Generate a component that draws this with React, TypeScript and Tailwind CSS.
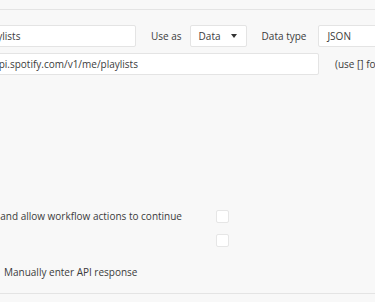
import { useState } from "react";

const inputClass =
  "h-[22px] shrink-0 rounded-[2px] border border-[#e4e4e4] bg-white px-[8px] flex items-center whitespace-nowrap overflow-hidden";

function Checkbox() {
  return (
    <div className="h-[13px] w-[13px] shrink-0 rounded-[2px] border border-[#e6e6e6] bg-white" />
  );
}

export default function App() {
  const [useAs] = useState("Data");

  return (
    <div
      className="relative h-[302px] w-[375px] overflow-hidden bg-[#f8f8f8] text-[10px] text-[#3b3b3b]"
      style={{ fontFamily: '"Open Sans", "Liberation Sans", sans-serif' }}
    >
      <div className="h-[10px] border-b border-[#e4e4e4]" />

      {/* name / use as / data type */}
      <div className="ml-[-45px] mt-[15px] flex items-center">
        <div className={`${inputClass} w-[181px]`}>Get playlists</div>
        <span className="ml-[15px] whitespace-nowrap">Use as</span>
        <div className={`${inputClass} ml-[8px] w-[57px] justify-between pr-[9px]`}>
          <span>{useAs}</span>
          <svg width="6" height="4" viewBox="0 0 6 4">
            <path d="M0 0h6L3 4z" fill="#333" />
          </svg>
        </div>
        <span className="ml-[15px] whitespace-nowrap">Data type</span>
        <div className={`${inputClass} ml-[12px] w-[90px]`}>JSON</div>
      </div>

      {/* url */}
      <div className="ml-[-50px] mt-[6px] flex items-center">
        <div className={`${inputClass} h-[21px] w-[369px]`}>
          https://api.spotify.com/v1/me/playlists
        </div>
        <span className="ml-[16px] whitespace-nowrap">
          (use [] for parameters in the URL)
        </span>
      </div>

      {/* options */}
      <div className="mt-[134px] flex items-center">
        <div className="flex w-[182px] justify-end">
          <span className="whitespace-nowrap">
            Include errors in response and allow workflow actions to continue
          </span>
        </div>
        <div className="ml-[34px]">
          <Checkbox />
        </div>
      </div>
      <div className="mt-[10px] flex items-center pl-[216px]">
        <Checkbox />
      </div>

      <div className="mt-[18px] pl-[4px] leading-[14px]">Manually enter API response</div>

      <div className="mt-[14px] border-t border-[#e4e4e4]" />
    </div>
  );
}
